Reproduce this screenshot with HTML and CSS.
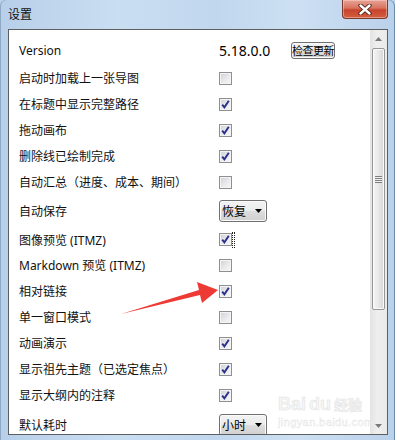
FILE: index.html
```html
<!DOCTYPE html>
<html lang="zh-CN">
<head>
  <meta charset="UTF-8">
  <title>设置</title>
  <link rel="stylesheet" href="styles.css">
</head>
<body>
<div class="window">
  <div class="titlebar">
    <span class="title">设置</span>
    <div class="close">
      <svg width="14" height="11" viewBox="0 0 14 11">
        <path d="M2.5 1.5 L11.5 9.5 M11.5 1.5 L2.5 9.5" stroke="#4a1d17" stroke-width="4.2" stroke-linecap="round"/>
        <path d="M2.5 1.5 L11.5 9.5 M11.5 1.5 L2.5 9.5" stroke="#fff" stroke-width="2.4" stroke-linecap="round"/>
      </svg>
    </div>
  </div>

  <div class="panel">
    <div class="list">
      <div class="row row-version">
        <span class="label">Version</span>
        <span class="version">5.18.0.0</span>
        <span class="btn">检查更新</span>
      </div>
      <div class="row"><span class="label">启动时加载上一张导图</span><span class="cb"></span></div>
      <div class="row"><span class="label">在标题中显示完整路径</span><span class="cb checked"><svg viewBox="0 0 11 11"><path d="M2.2 5.6 L4.4 8.4 L8.8 1.8" /></svg></span></div>
      <div class="row"><span class="label">拖动画布</span><span class="cb checked"><svg viewBox="0 0 11 11"><path d="M2.2 5.6 L4.4 8.4 L8.8 1.8" /></svg></span></div>
      <div class="row"><span class="label">删除线已绘制完成</span><span class="cb checked"><svg viewBox="0 0 11 11"><path d="M2.2 5.6 L4.4 8.4 L8.8 1.8" /></svg></span></div>
      <div class="row"><span class="label">自动汇总（进度、成本、期间）</span><span class="cb"></span></div>
      <div class="row row-select">
        <span class="label">自动保存</span>
        <span class="select">恢复<svg width="7" height="4" viewBox="0 0 7 4"><polygon points="0,0 7,0 3.5,4" fill="#000"/></svg></span>
      </div>
      <div class="row row-short"><span class="label">图像预览 (ITMZ)</span><span class="cb checked"><svg viewBox="0 0 11 11"><path d="M2.2 5.6 L4.4 8.4 L8.8 1.8" /></svg></span><span class="focus"></span></div>
      <div class="row"><span class="label">Markdown 预览 (ITMZ)</span><span class="cb"></span></div>
      <div class="row"><span class="label">相对链接</span><span class="cb checked"><svg viewBox="0 0 11 11"><path d="M2.2 5.6 L4.4 8.4 L8.8 1.8" /></svg></span></div>
      <div class="row"><span class="label">单一窗口模式</span><span class="cb"></span></div>
      <div class="row"><span class="label">动画演示</span><span class="cb checked"><svg viewBox="0 0 11 11"><path d="M2.2 5.6 L4.4 8.4 L8.8 1.8" /></svg></span></div>
      <div class="row"><span class="label">显示祖先主题（已选定焦点）</span><span class="cb checked"><svg viewBox="0 0 11 11"><path d="M2.2 5.6 L4.4 8.4 L8.8 1.8" /></svg></span></div>
      <div class="row"><span class="label">显示大纲内的注释</span><span class="cb checked"><svg viewBox="0 0 11 11"><path d="M2.2 5.6 L4.4 8.4 L8.8 1.8" /></svg></span></div>
      <div class="row row-last">
        <span class="label">默认耗时</span>
        <span class="select">小时<svg width="7" height="4" viewBox="0 0 7 4"><polygon points="0,0 7,0 3.5,4" fill="#000"/></svg></span>
      </div>
    </div>

    <div class="scrollbar">
      <div class="sb-btn"><svg width="7" height="4" viewBox="0 0 7 4"><polygon points="0,4 7,4 3.5,0" fill="#7a7a7a"/></svg></div>
      <div class="sb-track">
        <div class="sb-thumb"><span class="grip"></span></div>
      </div>
      <div class="sb-btn"><svg width="7" height="4" viewBox="0 0 7 4"><polygon points="0,0 7,0 3.5,4" fill="#7a7a7a"/></svg></div>
    </div>
  </div>

  <!-- red annotation arrow -->
  <svg class="pointer" width="395" height="440" viewBox="0 0 395 440">
    <polygon points="121,314 199,290 197,282 218,290 202,303 200,295" fill="#ee3a34"/>
  </svg>

  <div class="watermark">
    <div class="wm-logo">Bai<span class="paw">du</span><span class="wm-cn">经验</span></div>
    <div class="wm-url">jingyan.baidu.com</div>
  </div>
</div>
</body>
</html>
```

FILE: styles.css
```css
body {
  margin: 0;
  font-family: "Noto Sans", "Noto Sans CJK SC", sans-serif;
  font-size: 12px;
  color: #000;
  background: #bcd3ec;
}
.window {
  position: relative;
  width: 395px;
  height: 440px;
  overflow: hidden;
  border-radius: 6px 6px 0 0;
  background: linear-gradient(90deg, #b7cfe9 0%, #cadef2 30%, #c1d7ee 55%, #cde0f3 75%, #bad1eb 100%);
  box-shadow: inset 1px 0 #8ea8c6, inset -1px 0 #6f8bab;
}
.titlebar {
  height: 29px;
  display: flex;
  justify-content: space-between;
  align-items: flex-start;
}
.title {
  padding: 7px 0 0 8px;
  line-height: 16px;
  color: #111;
}
.close {
  width: 46px;
  height: 19px;
  margin-right: 7px;
  box-sizing: border-box;
  border: 1px solid #7b3a30;
  border-top: none;
  border-radius: 0 0 4px 4px;
  background: linear-gradient(#e6a396 0%, #d9735f 45%, #c8432c 55%, #d3603f 100%);
  box-shadow: inset 0 0 0 1px rgba(255, 220, 210, 0.45);
  display: flex;
  justify-content: center;
  align-items: center;
}
.panel {
  margin: 0 7px 0 8px;
  height: 404px;
  border: 1px solid #5e5e5e;
  background: #fff;
  display: flex;
  overflow: hidden;
}
.list {
  flex: 1;
  padding: 5px 0 0 10px;
}
.row {
  height: 26px;
  display: flex;
  align-items: center;
}
.row-version { height: 30px; }
.row-select { height: 32px; }
.row-short { height: 25px; }
.row-last { height: 33px; }
.label {
  width: 200px;
  flex: none;
  color: #111;
}
.version {
  width: 72px;
  font-size: 14px;
  color: #000;
}
.btn {
  width: 44px;
  height: 17px;
  box-sizing: border-box;
  border: 1px solid #707070;
  border-radius: 3px;
  background: linear-gradient(#f3f3f3 0%, #ebebeb 50%, #dddddd 51%, #d0d0d0 100%);
  box-shadow: inset 0 0 0 1px #fbfbfb;
  font-size: 11px;
  letter-spacing: -0.5px;
  line-height: 15px;
  display: flex;
  justify-content: center;
  white-space: nowrap;
}
.cb {
  width: 13px;
  height: 13px;
  box-sizing: border-box;
  border: 1px solid #8e8f8f;
  background: linear-gradient(135deg, #cdd0d4 0%, #e9eaec 55%, #f8f8f8 100%);
  box-shadow: inset 0 0 0 1px #f4f4f4;
  display: flex;
}
.cb svg {
  width: 11px;
  height: 11px;
}
.cb path {
  fill: none;
  stroke: #2a2f8c;
  stroke-width: 1.9;
}
.focus {
  width: 1px;
  height: 14px;
  border: 1px dotted #222;
}
.select {
  width: 48px;
  height: 22px;
  box-sizing: border-box;
  padding: 0 4px 0 2px;
  border: 1px solid #707070;
  border-radius: 3px;
  background: linear-gradient(#f3f3f3 0%, #ebebeb 50%, #dddddd 51%, #d0d0d0 100%);
  box-shadow: inset 0 0 0 1px #fbfbfb;
  display: flex;
  align-items: center;
  justify-content: space-between;
}
.scrollbar {
  width: 17px;
  flex: none;
  display: flex;
  flex-direction: column;
  background: linear-gradient(90deg, #e3e3e3, #eeeeee 40%, #eaeaea);
}
.sb-btn {
  height: 17px;
  display: flex;
  align-items: center;
  justify-content: center;
}
.sb-track {
  flex: 1;
  padding: 1px 2px 0 2px;
}
.sb-thumb {
  height: 262px;
  box-sizing: border-box;
  border: 1px solid #979797;
  border-radius: 2px;
  background: linear-gradient(90deg, #f6f6f6 0%, #e8e8e8 50%, #d6d6d6 100%);
  box-shadow: inset 0 0 0 1px #fbfbfb;
  display: flex;
  align-items: center;
  justify-content: center;
}
.grip {
  width: 7px;
  height: 7px;
  background: repeating-linear-gradient(#7d7d7d 0 1px, #f4f4f4 1px 2px);
}
.pointer {
  position: absolute;
  left: 0;
  top: 0;
  pointer-events: none;
}
.watermark {
  position: absolute;
  left: 278px;
  top: 393px;
  color: #f6f6f6;
  pointer-events: none;
}
.wm-logo {
  font-family: "Liberation Sans", "Noto Sans CJK SC", sans-serif;
  font-weight: bold;
  font-size: 18px;
  line-height: 22px;
  -webkit-text-stroke: 0.5px #e2e2e2;
}
.paw {
  margin: 0 3px;
}
.wm-cn {
  font-size: 14px;
}
.wm-url {
  font-family: "Liberation Sans", sans-serif;
  font-size: 11px;
  line-height: 13px;
  letter-spacing: 0.4px;
  -webkit-text-stroke: 0.3px #e2e2e2;
}
```
